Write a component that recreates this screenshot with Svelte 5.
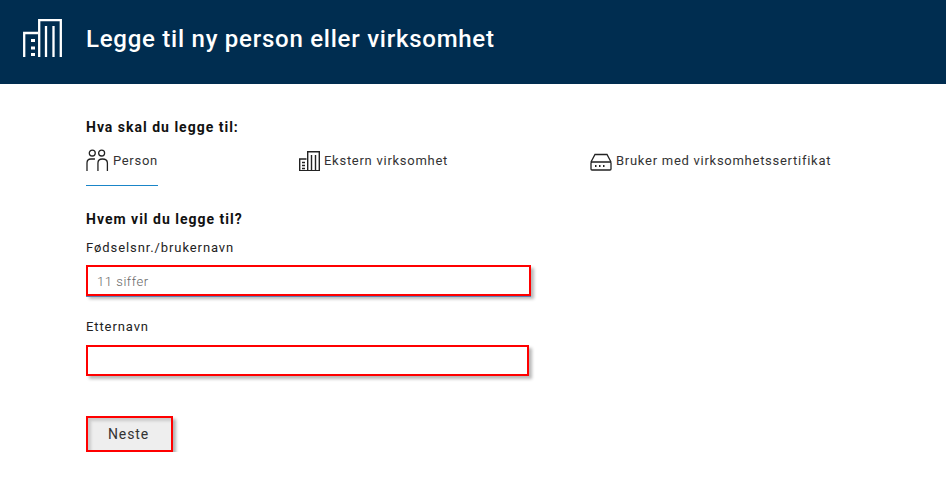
<script>
  const tabs = [
    { label: 'Person', icon: 'person', active: true },
    { label: 'Ekstern virksomhet', icon: 'building' },
    { label: 'Bruker med virksomhetssertifikat', icon: 'device' }
  ];
</script>

<header class="header">
  <svg class="logo" width="39" height="38" viewBox="0 0 39 38" fill="none" stroke="#fff" stroke-width="2.300">
    <path d="M1.200 38V14H15M16.200 38V1.200H37.800V38M23 7V38M30.500 7V38" />
    <path d="M8 21.500h4M8 29h4M8 35.500h4" stroke-width="3"/>
  </svg>
  <h1>Legge til ny person eller virksomhet</h1>
</header>

<main class="main">
  <h2 class="q1">Hva skal du legge til:</h2>
  <div class="tabs">
    {#each tabs as t}
      <div class="tab {t.icon}" class:active={t.active}>
        {#if t.icon === 'person'}
          <svg width="23" height="22" viewBox="0 0 23 22" fill="none" stroke="#222" stroke-width="1.300">
            <circle cx="6.300" cy="4" r="3"/>
            <circle cx="15.700" cy="4" r="3"/>
            <path d="M1 22V14Q1 10 5 10H9"/>
            <path d="M12 22V14Q12 10 16.500 10Q21.500 10 21.500 14V22"/>
          </svg>
        {:else if t.icon === 'building'}
          <svg width="21" height="20" viewBox="0 0 21 20" fill="none" stroke="#222" stroke-width="1.400">
            <path d="M.7 20V8H7.500M8.700 20V.7H20.300V20M12.500 4V20M16.500 4V20"/>
            <path d="M0 19.500H21" stroke-width="1"/>
            <path d="M3 11.500h3M3 14.500h3M3 17.500h3" stroke-width="1.600"/>
          </svg>
        {:else}
          <svg width="22" height="18" viewBox="0 0 22 18" fill="none" stroke="#222" stroke-width="1.300">
            <path d="M1 9L5 1.500H17L21 9"/>
            <rect x="1" y="9" width="20" height="8" rx="1"/>
            <path d="M5 13h1.500M9 13h1.500M13 13h1.500" stroke-width="2"/>
          </svg>
        {/if}
        <span>{t.label}</span>
      </div>
    {/each}
  </div>

  <h2 class="q2">Hvem vil du legge til?</h2>
  <label class="lbl" for="id">Fødselsnr./brukernavn</label>
  <input id="id" class="field first" placeholder="11 siffer" />
  <label class="lbl second" for="name">Etternavn</label>
  <input id="name" class="field last" />
  <button class="btn">Neste</button>
</main>

<style>
  :global(body) {
    margin: 0;
    background: #fff;
    font-family: Roboto, "Liberation Sans", sans-serif;
    color: #222;
  }
  .header {
    height: 84px;
    background: #002d50;
    display: flex;
    align-items: center;
    padding-left: 23px;
    box-sizing: border-box;
  }
  .logo { margin-top: -8px; }
  h1 {
    margin: -6px 0 0 24px;
    color: #fff;
    font-size: 24px;
    font-weight: 500;
    letter-spacing: 0.75px;
  }
  .main {
    padding: 34px 0 0 86px;
    display: flex;
    flex-direction: column;
    align-items: flex-start;
  }
  h2 {
    margin: 0;
    font-size: 14px;
    line-height: 18px;
    font-weight: 700;
    letter-spacing: 1px;
    color: #111;
  }
  .tabs { display: flex; margin-top: 13px; height: 45px; }
  .tab {
    display: flex;
    align-items: flex-start;
    gap: 4px;
    font-size: 13px;
    line-height: 18px;
    font-weight: 400;
    letter-spacing: 0.73px;
    color: #333;
    box-sizing: border-box;
    height: 37px;
  }
  .tab span { margin-top: 3px; }
  .tab.person { width: 72px; border-bottom: 1px solid #1a85c8; }
  .tab.building { margin-left: 141px; width: 291px; padding-top: 2px; }
  .tab.device { padding-top: 4px; }
  .tab.building span { margin-top: 1px; }
  .tab.device span { margin-top: -1px; }
  .q2 { margin-top: 16px; }
  .lbl {
    margin-top: 11px;
    font-size: 13px;
    line-height: 18px;
    font-weight: 400;
    letter-spacing: 0.9px;
    color: #222;
  }
  .lbl.second { margin-top: 22px; }
  .field {
    box-sizing: border-box;
    height: 31px;
    border: 2px solid #f00;
    outline: none;
    box-shadow: 3px 3px 3px rgba(0, 0, 0, 0.28);
    background: #fff;
    padding: 1px 9px 0;
    font: 300 13px Roboto, sans-serif;
    letter-spacing: 0.55px;
    margin-top: 8px;
  }
  .field::placeholder { color: #666; opacity: 1; }
  .first { width: 445px; box-shadow: 0 1px 0 #5b7fb5, 3px 3px 3px rgba(0, 0, 0, 0.28); }
  .last { width: 443px; margin-top: 9px; }
  .btn {
    margin-top: 40px;
    width: 87px;
    height: 36px;
    box-sizing: border-box;
    border: 2px solid #f00;
    background: #eee;
    box-shadow: 3px 3px 3px rgba(0, 0, 0, 0.3), inset 3px 3px 3px rgba(0,0,0,0.15);
    font: 400 14px Roboto, sans-serif;
    letter-spacing: 0.9px;
    color: #333;
    padding: 0 2px 0 0;
  }
</style>
